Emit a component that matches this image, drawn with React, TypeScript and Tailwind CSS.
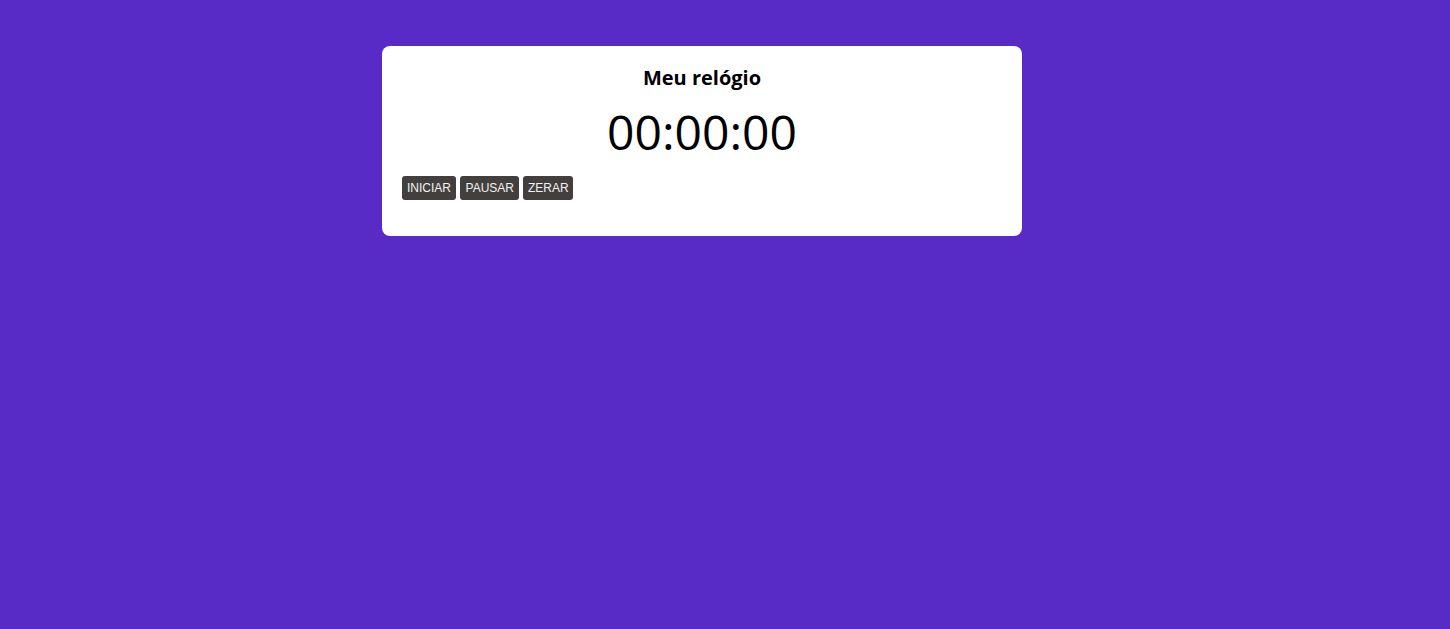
export default function App() {
	return (
		<div className="min-h-screen w-full bg-[#582ac6] pt-[46px]" style={{ fontFamily: '"Open Sans", sans-serif' }}>
			<div className="ml-[382px] w-[640px] rounded-lg bg-white px-5 pt-5 pb-9">
				<h1 className="text-center text-[20px] leading-[24px] font-bold text-black">Meu relógio</h1>
				<div className="mt-3 text-center text-[48px] leading-[60px] text-black">00:00:00</div>
				<div className="mt-[14px] flex gap-1 font-['Liberation_Sans',sans-serif]">
					<button className="h-6 rounded-[3px] bg-[#433f3f] px-[5px] text-[12px] text-[#f2f2f2]">INICIAR</button>
					<button className="h-6 rounded-[3px] bg-[#433f3f] px-[5.5px] text-[12px] text-[#f2f2f2]">PAUSAR</button>
					<button className="h-6 rounded-[3px] bg-[#433f3f] px-[4.5px] text-[12px] text-[#f2f2f2]">ZERAR</button>
				</div>
			</div>
		</div>
	);
}
